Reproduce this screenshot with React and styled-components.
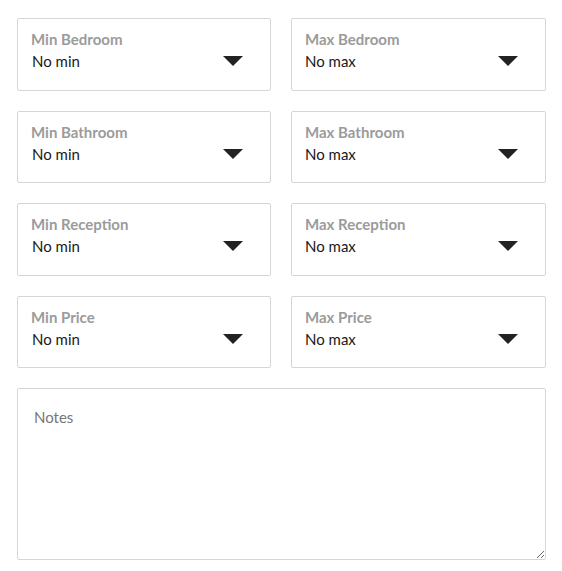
import React from 'react'
import styled, { createGlobalStyle } from 'styled-components'

const Global = createGlobalStyle`
  body {
    margin: 0;
    background: #fff;
    font-family: Lato, "Open Sans", sans-serif;
  }
`

const Form = styled.div`
  padding: 18px 16px 0 17px;
  display: flex;
  flex-direction: column;
  gap: 20px;
`

const Grid = styled.div`
  display: grid;
  grid-template-columns: 254px 255px;
  column-gap: 20px;
  row-gap: 20px;
`

const SelectBox = styled.div`
  height: 72.5px;
  box-sizing: border-box;
  border: 1px solid #d6d6d6;
  border-radius: 2px;
  padding: 10px 27px 0 13px;
  display: grid;
  grid-template-columns: 1fr auto;
  grid-template-rows: auto auto;
  align-content: start;
`

const Label = styled.div`
  grid-column: 1 / 3;
  font-size: 15px;
  font-weight: 700;
  color: #9b9b9b;
  line-height: 20px;
  margin-bottom: 1px;
`

const Value = styled.div`
  font-size: 15px;
  color: #1a1a1a;
  line-height: 22px;
  padding-left: ${(p) => (p.$indent ? '1px' : '0')};
`

const Arrow = styled.span`
  align-self: center;
  width: 0;
  height: 0;
  border-left: 10px solid transparent;
  border-right: 10px solid transparent;
  border-top: 10px solid #222;
`

const Notes = styled.textarea`
  display: block;
  width: 529px;
  height: 172px;
  box-sizing: border-box;
  border: 1px solid #d6d6d6;
  border-radius: 2px;
  padding: 19px 16px;
  font-family: Lato, "Open Sans", sans-serif;
  font-size: 15px;
  color: #333;
  resize: vertical;
  outline: none;
  &::placeholder {
    color: #777;
  }
`

const fields = ['Bedroom', 'Bathroom', 'Reception', 'Price']

export default function App() {
  return (
    <>
      <Global />
      <Form>
        <Grid>
          {fields.map((f) => (
            <React.Fragment key={f}>
              <SelectBox>
                <Label>Min {f}</Label>
                <Value $indent>No min</Value>
                <Arrow />
              </SelectBox>
              <SelectBox>
                <Label>Max {f}</Label>
                <Value>No max</Value>
                <Arrow />
              </SelectBox>
            </React.Fragment>
          ))}
        </Grid>
        <Notes placeholder="Notes" />
      </Form>
    </>
  )
}
